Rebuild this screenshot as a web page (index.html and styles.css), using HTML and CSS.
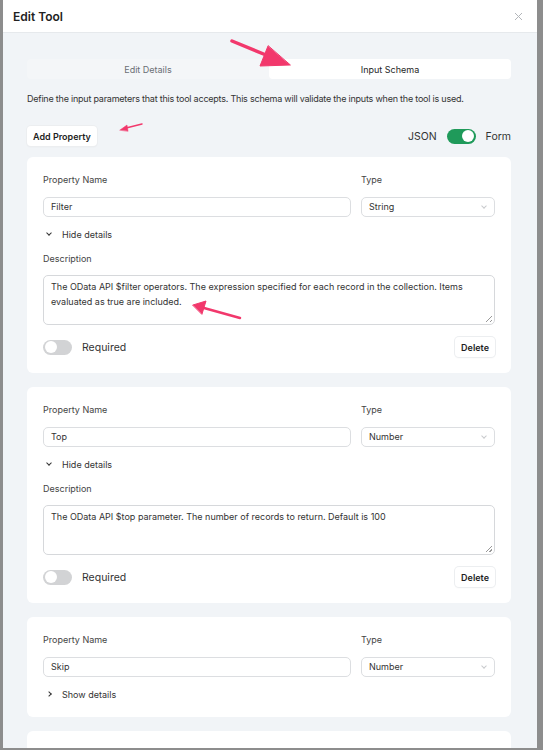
FILE: index.html
```html
<!DOCTYPE html>
<html lang="en">
<head>
    <meta charset="UTF-8" />
    <meta content="width=device-width, initial-scale=1.0" name="viewport" />
    <title>Edit Tool</title>
    <link rel="stylesheet" href="styles.css">
</head>
<body>

<div class="backdrop">
    <div class="modal">
        <header class="modal-header">
            <h1>Edit Tool</h1>
            <button class="close-btn" aria-label="Close">
                <svg width="9" height="9" viewBox="0 0 9 9"><path d="M1 1L8 8M8 1L1 8" stroke="#b3b6ba" stroke-width="1" fill="none"/></svg>
            </button>
        </header>

        <div class="modal-body">
            <!-- Tabs -->
            <div class="tabs">
                <button class="tab">Edit Details</button>
                <button class="tab active">Input Schema</button>
            </div>

            <p class="intro">Define the input parameters that this tool accepts. This schema will validate the inputs when the tool is used.</p>

            <div class="toolbar">
                <button class="btn">Add Property</button>
                <div class="mode-switch">
                    <span>JSON</span>
                    <span class="switch on"></span>
                    <span>Form</span>
                </div>
            </div>

            <!-- Property cards -->
            <section class="prop-card">
                <div class="field-row">
                    <label>Property Name</label>
                    <label>Type</label>
                    <div class="input">Filter</div>
                    <div class="input select">String<span class="caret"></span></div>
                </div>
                <div class="details-toggle"><span class="chev down"></span>Hide details</div>
                <label class="desc-label">Description</label>
                <div class="textarea">The OData API $filter operators. The expression specified for each record in the collection. Items evaluated as true are included.<span class="grip"></span></div>
                <div class="card-footer">
                    <div class="required"><span class="switch"></span>Required</div>
                    <button class="btn">Delete</button>
                </div>
            </section>

            <section class="prop-card">
                <div class="field-row">
                    <label>Property Name</label>
                    <label>Type</label>
                    <div class="input">Top</div>
                    <div class="input select">Number<span class="caret"></span></div>
                </div>
                <div class="details-toggle"><span class="chev down"></span>Hide details</div>
                <label class="desc-label">Description</label>
                <div class="textarea">The OData API $top parameter. The number of records to return. Default is 100<span class="grip"></span></div>
                <div class="card-footer">
                    <div class="required"><span class="switch"></span>Required</div>
                    <button class="btn">Delete</button>
                </div>
            </section>

            <section class="prop-card">
                <div class="field-row">
                    <label>Property Name</label>
                    <label>Type</label>
                    <div class="input">Skip</div>
                    <div class="input select">Number<span class="caret"></span></div>
                </div>
                <div class="details-toggle"><span class="chev right"></span>Show details</div>
            </section>

            <section class="prop-card"></section>
        </div>
    </div>
</div>

<!-- Annotation arrows -->
<svg class="marks" width="543" height="750" viewBox="0 0 543 750">
    <g fill="#f2386c" stroke="#f2386c" stroke-linecap="round">
        <line x1="232" y1="41" x2="266" y2="55" stroke-width="3.5"/>
        <polygon points="290,65 260,66 268,46" stroke-width="1"/>
        <line x1="142" y1="124" x2="126" y2="128" stroke-width="1.5"/>
        <polygon points="120,130 127,125 128,131" stroke-width="0.5"/>
        <line x1="240" y1="318" x2="204" y2="308" stroke-width="2.5"/>
        <polygon points="193,305 206,301 202,314" stroke-width="1"/>
    </g>
</svg>

</body>
</html>
```

FILE: styles.css
```css
* {
    box-sizing: border-box;
    margin: 0;
    padding: 0;
    font-family: 'Inter', 'Liberation Sans', sans-serif;
}

body {
    background: #8d8d8d;
    color: #2b2b2b;
    overflow: hidden;
    height: 750px;
}

.backdrop {
    padding-left: 3px;
}

.modal {
    width: 534px;
    height: 748px;
    background: #f1f4f7;
    overflow: hidden;
}

.modal-header {
    height: 33px;
    background: #ffffff;
    border-bottom: 1px solid #e6e9ec;
    display: flex;
    align-items: center;
    justify-content: space-between;
    padding: 0 14px 0 10px;
}

.modal-header h1 {
    font-size: 12px;
    font-weight: 600;
    color: #222;
}

.close-btn {
    background: none;
    border: none;
    display: flex;
}

.modal-body {
    padding: 26px 26px 0 24px;
}

.tabs {
    display: grid;
    grid-template-columns: 1fr 1fr;
    height: 20px;
    background: #f4f6f8;
    border-radius: 4px;
}

.tab {
    border: none;
    background: none;
    font-size: 9px;
    color: #6b6f75;
    border-radius: 4px;
}

.tab.active {
    background: #ffffff;
    color: #1f1f1f;
}

.intro {
    margin-top: 14px;
    font-size: 9px;
    letter-spacing: -0.22px;
    line-height: 12px;
    color: #333;
    white-space: nowrap;
}

.toolbar {
    margin-top: 21px;
    display: flex;
    align-items: center;
    justify-content: space-between;
}

.btn {
    height: 20px;
    padding: 0 6px;
    background: #ffffff;
    border: none;
    border-radius: 4px;
    font-size: 9px;
    font-weight: 600;
    color: #1e1e1e;
    box-shadow: 0 0 0 1px #eceef0, 0 1px 2px rgba(0, 0, 0, 0.05);
}

.mode-switch {
    display: flex;
    align-items: center;
    gap: 10px;
    font-size: 10.5px;
    color: #333;
}

.switch {
    width: 29px;
    height: 15px;
    border-radius: 8px;
    background: #d2d3d5;
    position: relative;
    display: inline-block;
}

.switch::after {
    content: '';
    position: absolute;
    top: 1.5px;
    left: 1.5px;
    width: 12px;
    height: 12px;
    border-radius: 50%;
    background: #ffffff;
}

.switch.on {
    background: #1f9a5a;
}

.switch.on::after {
    left: 15.5px;
}

.prop-card {
    margin-top: 11px;
    background: #ffffff;
    border-radius: 6px;
    padding: 16px;
}

.prop-card + .prop-card {
    margin-top: 14px;
}

.field-row {
    display: grid;
    grid-template-columns: 1fr 134px;
    column-gap: 10px;
    row-gap: 10px;
}

label {
    font-size: 9px;
    line-height: 14px;
    color: #444;
    display: block;
}

.input {
    height: 20px;
    border: 1px solid #dcdee1;
    border-radius: 5px;
    padding: 0 7px;
    font-size: 9px;
    line-height: 18px;
    color: #333;
    position: relative;
}

.select .caret {
    position: absolute;
    right: 8px;
    top: 6px;
    width: 4px;
    height: 4px;
    border-right: 1px solid #c8cacd;
    border-bottom: 1px solid #c8cacd;
    transform: rotate(45deg);
}

.details-toggle {
    margin-top: 10px;
    height: 14px;
    display: flex;
    align-items: center;
    font-size: 9px;
    color: #333;
}

.chev {
    width: 4px;
    height: 4px;
    border-right: 1.5px solid #333;
    border-bottom: 1.5px solid #333;
    margin: 0 11px 0 4px;
}

.chev.down {
    transform: translateY(-1px) rotate(45deg);
}

.chev.right {
    transform: rotate(-45deg);
}

.desc-label {
    margin-top: 11px;
}

.textarea {
    margin-top: 9px;
    height: 50px;
    border: 1px solid #d6d8db;
    border-radius: 5px;
    padding: 3px 7px;
    font-size: 9px;
    line-height: 15px;
    color: #333;
    position: relative;
}

.grip {
    position: absolute;
    right: 2px;
    bottom: 2px;
    width: 6px;
    height: 6px;
    background: linear-gradient(135deg, transparent 45%, #999 45%, #999 55%, transparent 55%, transparent 75%, #999 75%, #999 85%, transparent 85%);
}

.card-footer {
    margin-top: 12px;
    display: flex;
    align-items: center;
    justify-content: space-between;
}

.required {
    display: flex;
    align-items: center;
    gap: 10px;
    font-size: 10.5px;
    color: #333;
}

.marks {
    position: absolute;
    top: 0;
    left: 0;
    pointer-events: none;
}
```
